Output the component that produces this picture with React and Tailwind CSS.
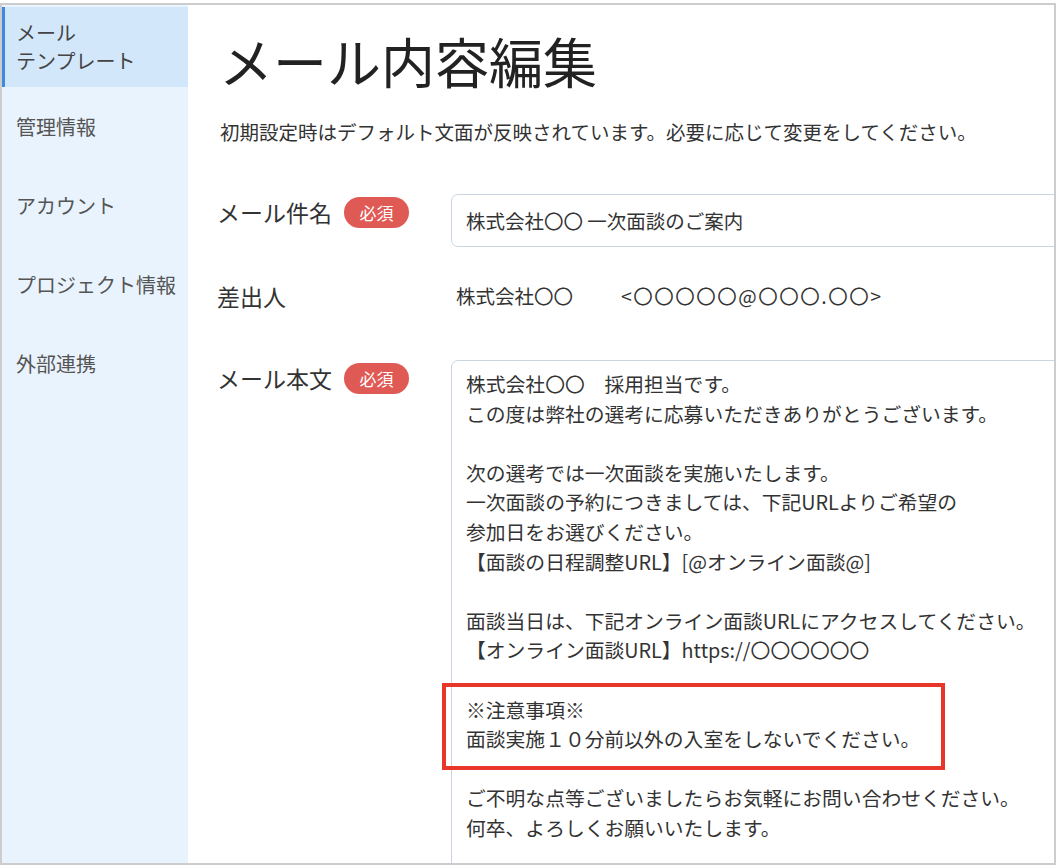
import React from "react";

const navItems = [
  { label: ["メール", "テンプレート"], active: true },
  { label: ["管理情報"] },
  { label: ["アカウント"] },
  { label: ["プロジェクト情報"] },
  { label: ["外部連携"] },
];

const bodyTop = [
  "株式会社〇〇　採用担当です。",
  "この度は弊社の選考に応募いただきありがとうございます。",
  "",
  "次の選考では一次面談を実施いたします。",
  "一次面談の予約につきましては、下記URLよりご希望の",
  "参加日をお選びください。",
  "【面談の日程調整URL】[@オンライン面談@]",
  "",
  "面談当日は、下記オンライン面談URLにアクセスしてください。",
  "【オンライン面談URL】https://〇〇〇〇〇〇",
  "",
];

const bodyBottom = [
  "",
  "ご不明な点等ございましたらお気軽にお問い合わせください。",
  "何卒、よろしくお願いいたします。",
];

const Badge = () => (
  <span className="ml-[12px] inline-flex h-[31px] w-[65px] items-center justify-center rounded-full bg-[#e05a55] text-[17px] leading-none text-white">
    必須
  </span>
);

const Line = ({ text }) => (
  <div className="h-[29.6px] whitespace-pre leading-[29.6px]">{text || "\u00a0"}</div>
);

const App = () => {
  return (
    <div
      className="h-[868px] w-[1058px] bg-white pt-[3px]"
      style={{ fontFamily: '"Noto Sans CJK JP", "Noto Sans", sans-serif' }}
    >
      <div className="flex h-[862px] w-[1056px] overflow-hidden border-2 border-[#cdcdcd]">
        {/* sidebar */}
        <aside className="w-[186px] shrink-0 bg-[#e9f3fd] pt-[2px]">
          {navItems.map((item, i) => (
            <div
              key={i}
              className={
                item.active
                  ? "flex h-[80px] flex-col justify-center border-l-[3px] border-[#3e8ae0] bg-[#d3e7fb] pl-[11px] text-[20px] leading-[28px] text-[#444]"
                  : "flex h-[79px] flex-col justify-center pl-[14px] text-[20px] leading-[28px] text-[#555]"
              }
            >
              {item.label.map((l) => (
                <span key={l}>{l}</span>
              ))}
            </div>
          ))}
        </aside>

        {/* main */}
        <main className="min-w-0 flex-1 bg-white pl-[29px] text-[#333]">
          <h1 className="mt-[23px] pl-[2px] text-[54px] font-normal leading-[66px] text-[#222]">
            メール内容編集
          </h1>
          <p className="mt-[24px] pl-[3px] text-[19.5px] leading-[28px]">
            初期設定時はデフォルト文面が反映されています。必要に応じて変更をしてください。
          </p>

          <div className="mt-[48px] flex items-start">
            <div className="flex h-[36px] w-[234px] shrink-0 items-center text-[23px]">
              メール件名
              <Badge />
            </div>
            <div className="flex h-[53px] w-[700px] shrink-0 items-center rounded-[7px] border border-[#c9d6e2] px-[14px] text-[19.5px]">
              株式会社〇〇 一次面談のご案内
            </div>
          </div>

          <div className="mt-[31px] flex h-[36px] items-center">
            <div className="w-[234px] shrink-0 text-[23px]">差出人</div>
            <div className="flex pl-[5px] text-[19.5px]">
              <span>株式会社〇〇</span>
              <span className="ml-[48px] tracking-[1.5px]">&lt;〇〇〇〇〇@〇〇〇.〇〇&gt;</span>
            </div>
          </div>

          <div className="mt-[46px] flex items-start">
            <div className="flex h-[36px] w-[234px] shrink-0 items-center text-[23px]">
              メール本文
              <Badge />
            </div>
            <div className="h-[560px] w-[700px] shrink-0 rounded-[7px] border border-[#c9d6e2] px-[14px] pt-[8px] text-[19.8px]">
              {bodyTop.map((t, i) => (
                <Line key={i} text={t} />
              ))}
              <div className="relative">
                <Line text="※注意事項※" />
                <Line text="面談実施１０分前以外の入室をしないでください。" />
                <span className="pointer-events-none absolute -left-[24px] -top-[12px] h-[87px] w-[503px] border-[4px] border-[#e8362a]" />
              </div>
              {bodyBottom.map((t, i) => (
                <Line key={i} text={t} />
              ))}
            </div>
          </div>
        </main>
      </div>
    </div>
  );
};

export default App;
